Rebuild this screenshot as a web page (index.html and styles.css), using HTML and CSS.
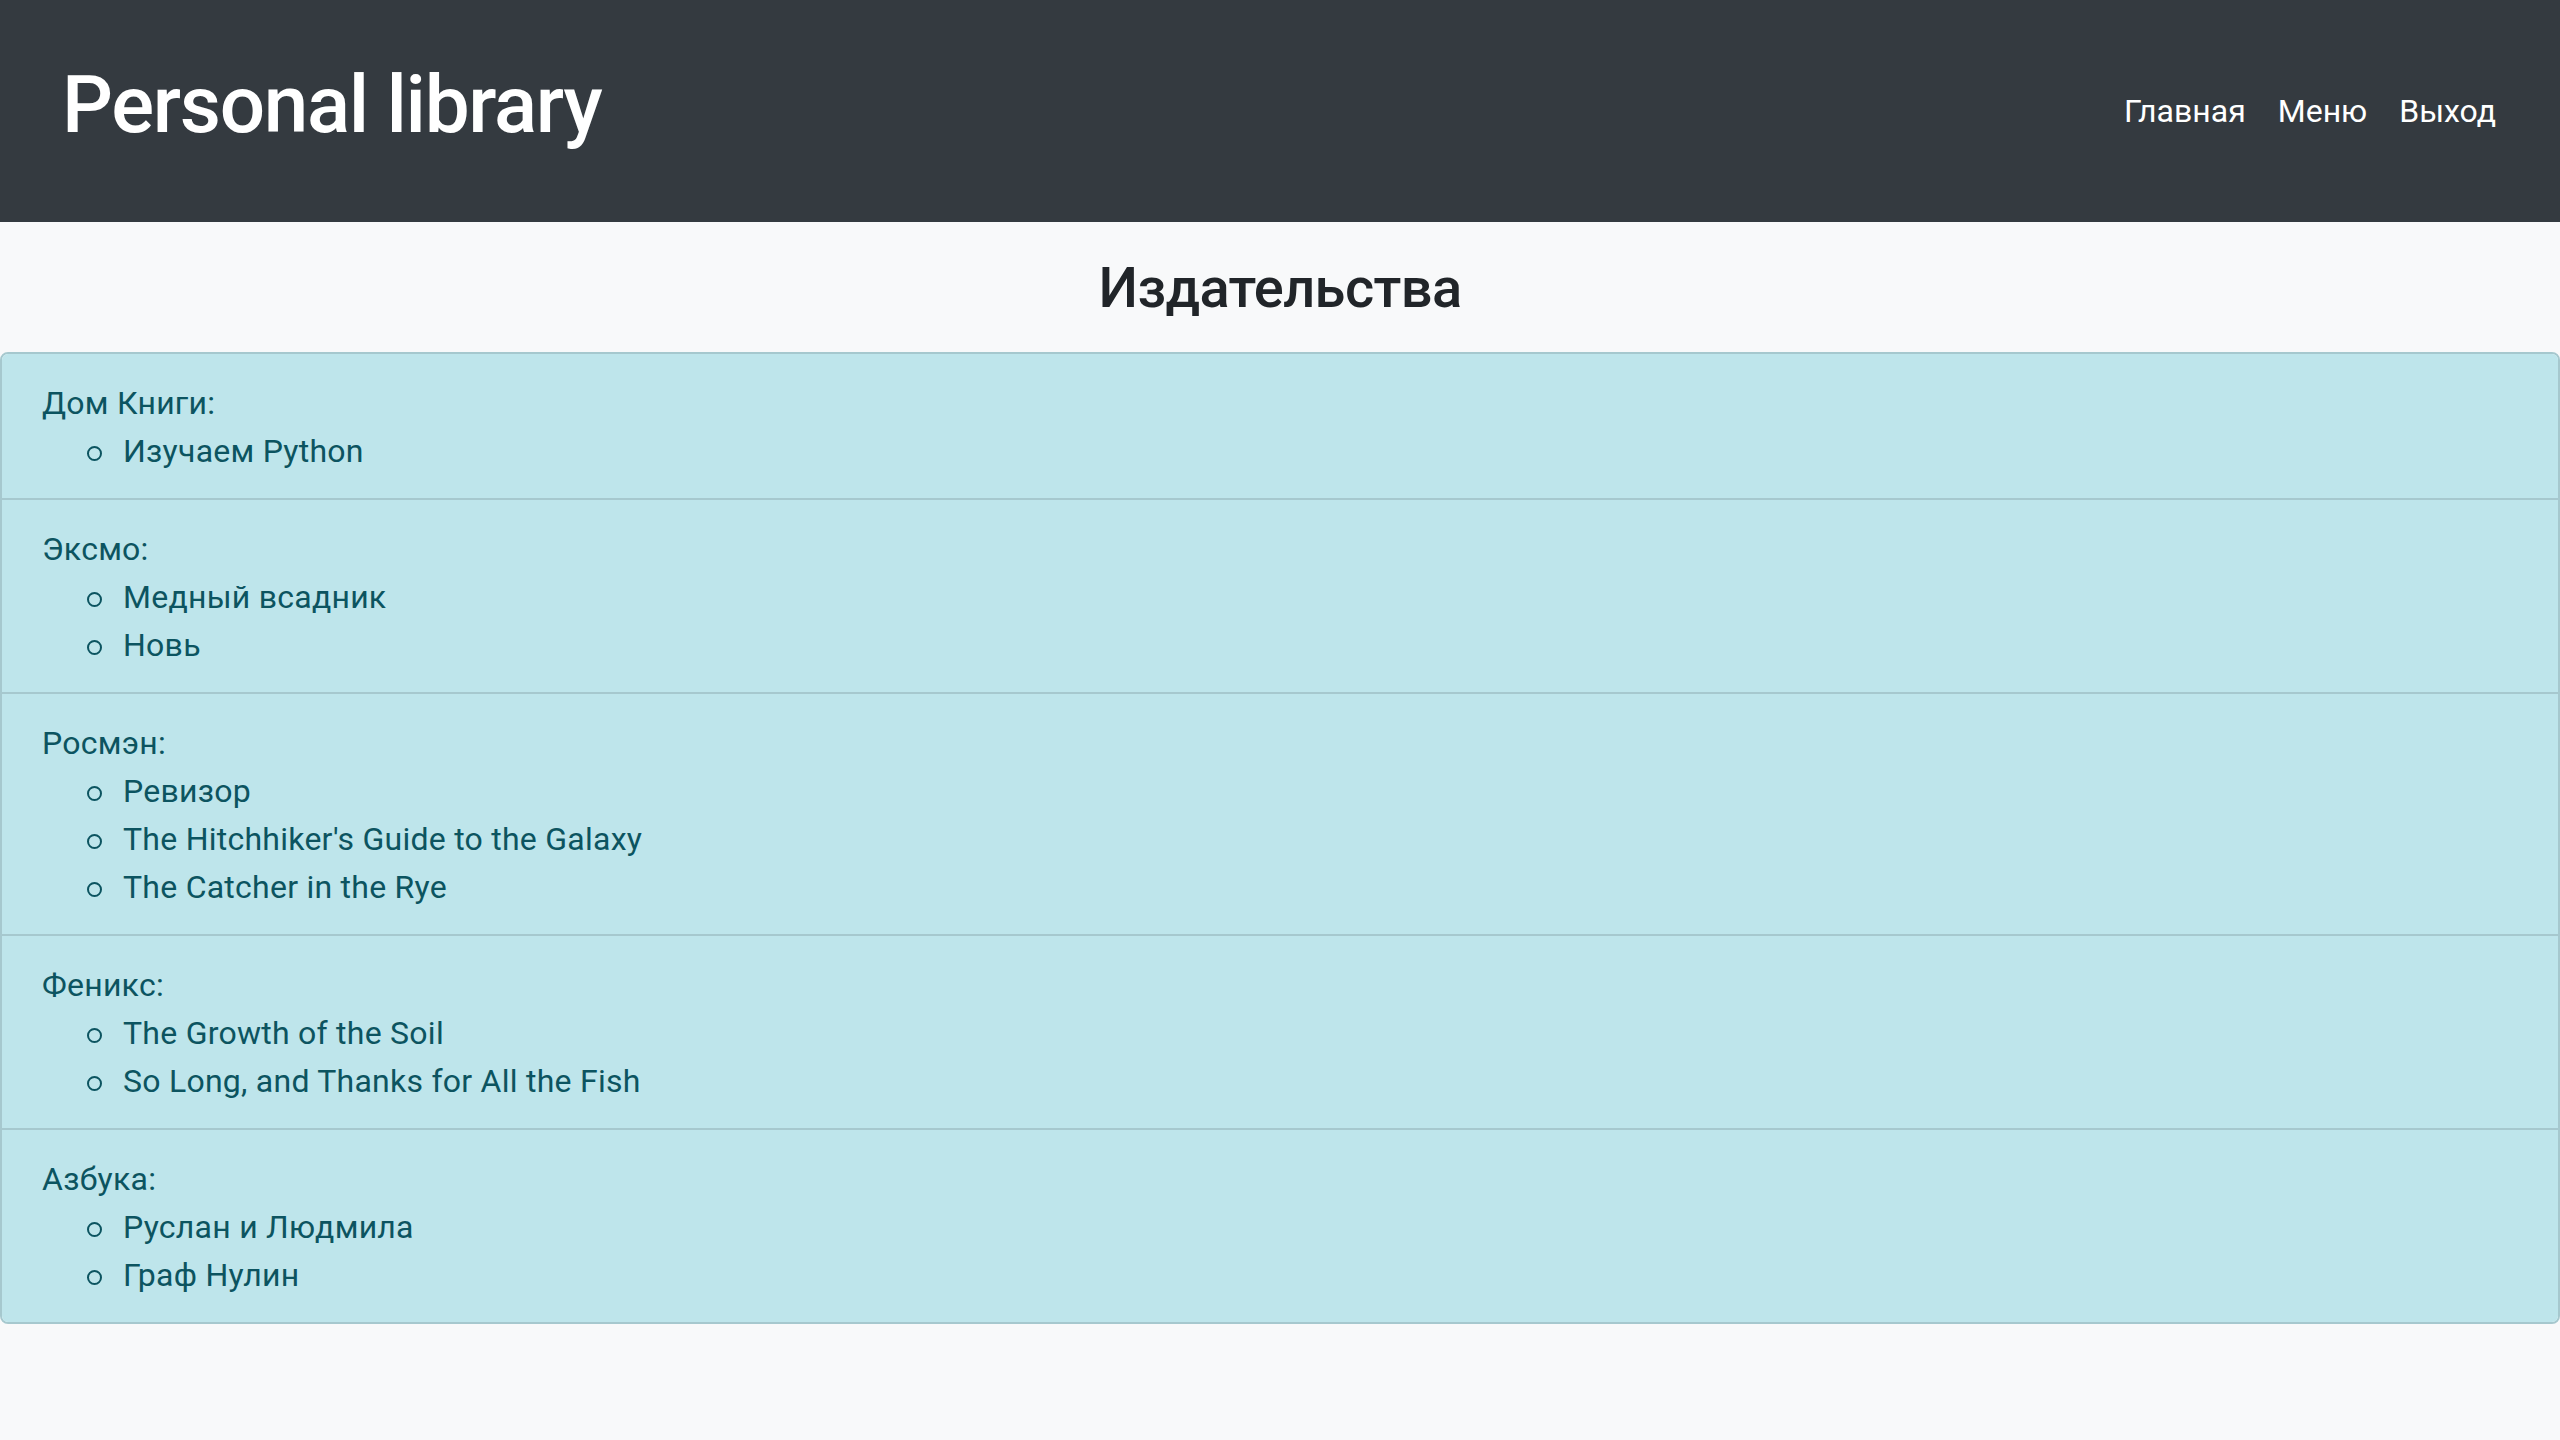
FILE: index.html
```html
<!DOCTYPE html>
<html lang="ru">
<head>
<meta charset="utf-8">
<title>Personal library</title>
<link rel="stylesheet" href="styles.css">
</head>
<body>
<header class="navbar">
  <h1 class="brand">Personal library</h1>
  <nav class="nav">
    <a class="nav-link" href="#">Главная</a>
    <a class="nav-link" href="#">Меню</a>
    <a class="nav-link" href="#">Выход</a>
  </nav>
</header>
<main>
  <h3 class="page-title">Издательства</h3>
  <ul class="list-group">
    <li class="list-item">
      <div class="pub">Дом Книги:</div>
      <ul class="books">
        <li>Изучаем Python</li>
      </ul>
    </li>
    <li class="list-item">
      <div class="pub">Эксмо:</div>
      <ul class="books">
        <li>Медный всадник</li>
        <li>Новь</li>
      </ul>
    </li>
    <li class="list-item">
      <div class="pub">Росмэн:</div>
      <ul class="books">
        <li>Ревизор</li>
        <li>The Hitchhiker's Guide to the Galaxy</li>
        <li>The Catcher in the Rye</li>
      </ul>
    </li>
    <li class="list-item">
      <div class="pub">Феникс:</div>
      <ul class="books">
        <li>The Growth of the Soil</li>
        <li>So Long, and Thanks for All the Fish</li>
      </ul>
    </li>
    <li class="list-item">
      <div class="pub">Азбука:</div>
      <ul class="books">
        <li>Руслан и Людмила</li>
        <li>Граф Нулин</li>
      </ul>
    </li>
  </ul>
</main>
</body>
</html>
```
FILE: styles.css
```css
* { box-sizing: border-box; }
html, body {
  margin: 0;
  padding: 0;
}
body {
  background: #f8f9fa;
  color: #212529;
  font-family: Roboto, "Noto Sans", sans-serif;
  font-size: 32px;
  line-height: 1.5;
}
.navbar {
  height: 222px;
  background: #343a40;
  display: flex;
  align-items: center;
  justify-content: space-between;
  padding: 0 48px 0 62px;
}
.brand {
  margin: 0 0 12px 0;
  font-size: 80px;
  font-weight: 500;
  line-height: 1.2;
  color: #fff;
  letter-spacing: -1.3px;
}
.nav {
  display: flex;
}
.nav-link {
  color: #fff;
  text-decoration: none;
  padding: 0 16px;
  font-size: 32px;
  line-height: 48px;
}
.page-title {
  margin: 33px 0 30px;
  text-align: center;
  font-size: 56px;
  font-weight: 500;
  line-height: 1.2;
  color: #212529;
  letter-spacing: -0.6px;
}
.list-group {
  list-style: none;
  margin: 0;
  padding: 0;
  border: 2px solid #a6c8ce;
  border-radius: 8px;
  overflow: hidden;
}
.list-item {
  background: #bee5eb;
  color: #0c5460;
  padding: 25px 40px 23px;
  border-top: 2px solid #a6c8ce;
  letter-spacing: 0.25px;
}
.list-item:first-child { border-top: 0; }
.pub { line-height: 48px; }
.books {
  margin: 0;
  padding-left: 80px;
  list-style: none;
}
.books li { line-height: 48px; }
.books li::before {
  content: "";
  display: inline-block;
  width: 11px;
  height: 11px;
  border: 2px solid currentColor;
  border-radius: 50%;
  margin-left: -35px;
  margin-right: 21px;
  vertical-align: middle;
}
```
